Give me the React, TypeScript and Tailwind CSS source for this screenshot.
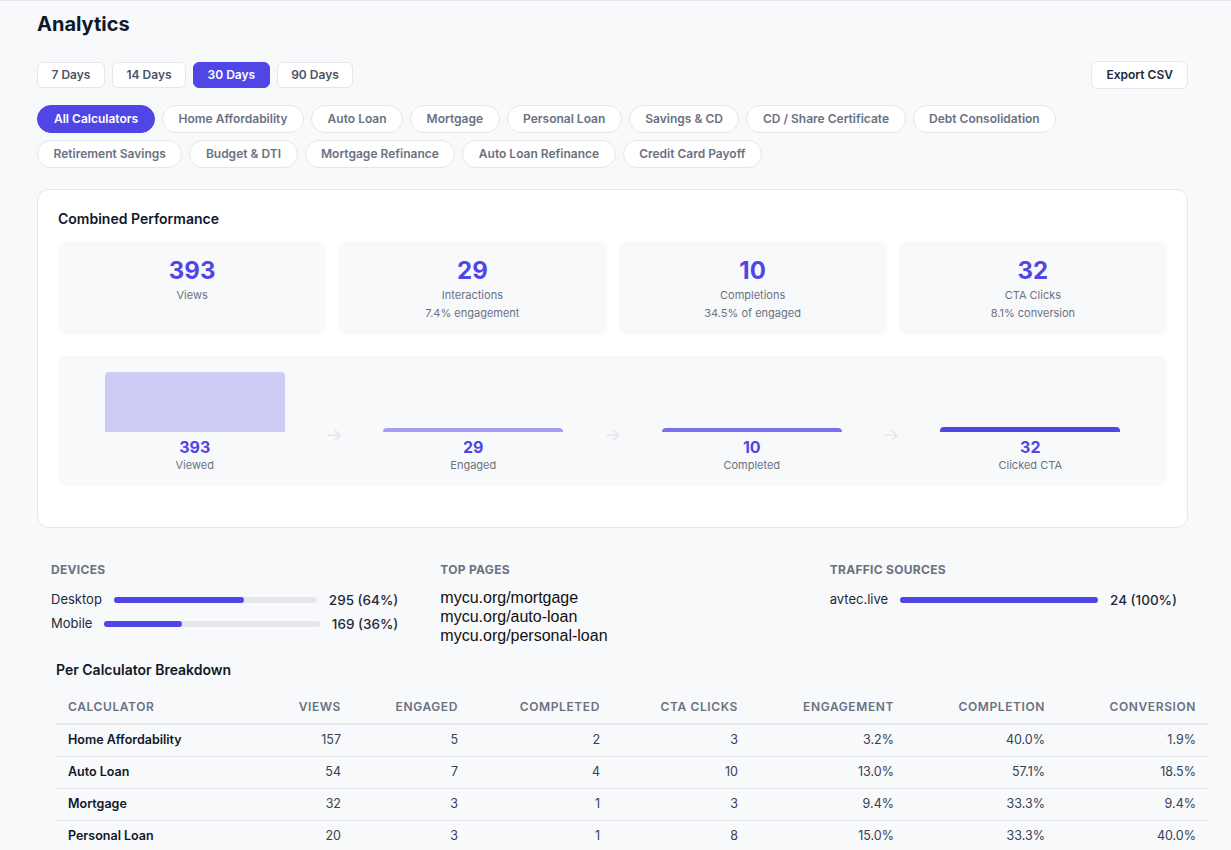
import React from "react";

const ranges = ["7 Days", "14 Days", "30 Days", "90 Days"];
const calcs = [
  "All Calculators",
  "Home Affordability",
  "Auto Loan",
  "Mortgage",
  "Personal Loan",
  "Savings & CD",
  "CD / Share Certificate",
  "Debt Consolidation",
  "Retirement Savings",
  "Budget & DTI",
  "Mortgage Refinance",
  "Auto Loan Refinance",
  "Credit Card Payoff",
];

const stats = [
  { value: 393, label: "Views", sub: "" },
  { value: 29, label: "Interactions", sub: "7.4% engagement" },
  { value: 10, label: "Completions", sub: "34.5% of engaged" },
  { value: 32, label: "CTA Clicks", sub: "8.1% conversion" },
];

const funnel = [
  { value: 393, label: "Viewed", color: "bg-[#4f46e5]/25" },
  { value: 29, label: "Engaged", color: "bg-[#4f46e5]/50" },
  { value: 10, label: "Completed", color: "bg-[#4f46e5]/75" },
  { value: 32, label: "Clicked CTA", color: "bg-[#4f46e5]" },
];

const rows = [
  ["Home Affordability", "157", "5", "2", "3", "3.2%", "40.0%", "1.9%"],
  ["Auto Loan", "54", "7", "4", "10", "13.0%", "57.1%", "18.5%"],
  ["Mortgage", "32", "3", "1", "3", "9.4%", "33.3%", "9.4%"],
  ["Personal Loan", "20", "3", "1", "8", "15.0%", "33.3%", "40.0%"],
];

const heads = ["Calculator", "Views", "Engaged", "Completed", "CTA Clicks", "Engagement", "Completion", "Conversion"];
const widths = ["w-[200px]", "w-[97px]", "w-[117px]", "w-[142px]", "w-[138px]", "w-[156px]", "w-[151px]", "w-[151px]"];

function Bar({ label, value, pct }: { label: string; value: string; pct: number }) {
  return (
    <div className="flex h-6 items-center gap-3 text-[13px] text-gray-800">
      <span>{label}</span>
      <div className="h-[6px] flex-1 rounded-full bg-gray-200">
        <div className="h-full rounded-full bg-[#4f46e5]" style={{ width: `${pct}%` }} />
      </div>
      <span className="text-[13.5px] font-medium">{value}</span>
    </div>
  );
}

export default function App() {
  const max = 393;
  return (
    <div className="min-h-screen border-t border-gray-200 bg-[#f8f9fb] pt-[9px] pr-[43px] pl-[37px] text-gray-900 [font-family:Inter,'Noto_Sans',sans-serif]">
      <h1 className="text-[20px] leading-7 font-bold text-gray-900">Analytics</h1>

      <div className="mt-[23px] flex items-center justify-between">
        <div className="flex gap-[7px]">
          {ranges.map((r) => (
            <button
              key={r}
              className={
                r === "30 Days"
                  ? "h-[26px] rounded-md border border-[#4f46e5] bg-[#4f46e5] px-[13.5px] text-[12px] font-semibold text-white"
                  : "h-[26px] rounded-md border border-gray-200 bg-white px-[13.5px] text-[12px] font-semibold text-gray-600"
              }
            >
              {r}
            </button>
          ))}
        </div>
        <button className="h-[28px] rounded-md border border-gray-200 bg-white px-[14px] text-[12px] font-semibold text-gray-800">
          Export CSV
        </button>
      </div>

      <div className="mt-4 flex flex-wrap gap-[7px]">
        {calcs.map((c) => (
          <button
            key={c}
            className={
              c === "All Calculators"
                ? "h-[28px] rounded-full border border-[#4f46e5] bg-[#4f46e5] px-4 text-[12px] font-semibold text-white"
                : "h-[28px] rounded-full border border-gray-200 bg-white px-[15.5px] text-[12px] font-semibold text-gray-500"
            }
          >
            {c}
          </button>
        ))}
      </div>

      <div className="mt-[21px] rounded-xl border border-gray-200 bg-white px-5 pt-[19px] pb-[41px]">
        <h2 className="text-[14px] leading-5 font-semibold text-gray-900">Combined Performance</h2>
        <div className="mt-3 grid grid-cols-4 gap-3">
          {stats.map((s) => (
            <div key={s.label} className="flex h-[94px] flex-col items-center rounded-lg bg-[#f8f9fb] pt-4">
              <div className="text-[24px] leading-7 font-bold text-[#4f46e5]">{s.value}</div>
              <div className="mt-[2px] text-[11px] leading-4 text-gray-500">{s.label}</div>
              {s.sub && <div className="mt-[2px] text-[11px] leading-4 text-gray-500">{s.sub}</div>}
            </div>
          ))}
        </div>

        <div className="mt-[21px] flex items-start rounded-lg bg-[#f8f9fb] px-6 pt-4 pb-[13px]">
          {funnel.map((f, i) => (
            <React.Fragment key={f.label}>
              {i > 0 && (
                <div className="flex h-[60px] w-[53px] shrink-0 items-end justify-center text-[18px] leading-none text-gray-200">
                  <span className="translate-y-[12px]">→</span>
                </div>
              )}
              <div className="flex flex-1 flex-col items-center">
                <div className="flex h-[60px] w-[80%] items-end">
                  <div
                    className={`w-full rounded-t ${f.color}`}
                    style={{ height: `${Math.max(4, (f.value / max) * 60)}px` }}
                  />
                </div>
                <div className="mt-[5px] text-[16px] leading-5 font-bold text-[#4f46e5]">{f.value}</div>
                <div className="text-[11px] leading-4 text-gray-500">{f.label}</div>
              </div>
            </React.Fragment>
          ))}
        </div>
      </div>

      <div className="mt-[34px] grid grid-cols-3 gap-[42px] pr-[11px] pl-[14px]">
        <div>
          <div className="text-[12px] leading-4 font-bold tracking-wide text-gray-500 uppercase">Devices</div>
          <div className="mt-[10px] flex flex-col">
            <Bar label="Desktop" value="295 (64%)" pct={64} />
            <Bar label="Mobile" value="169 (36%)" pct={36} />
          </div>
        </div>
        <div>
          <div className="text-[12px] leading-4 font-bold tracking-wide text-gray-500 uppercase">Top Pages</div>
          <div className="mt-[10px] text-[16px] leading-[19px] text-[#111] [font-family:'Liberation_Sans',Arial,sans-serif]">
            <div>mycu.org/mortgage</div>
            <div>mycu.org/auto-loan</div>
            <div>mycu.org/personal-loan</div>
          </div>
        </div>
        <div>
          <div className="text-[12px] leading-4 font-bold tracking-wide text-gray-500 uppercase">Traffic Sources</div>
          <div className="mt-[10px]">
            <Bar label="avtec.live" value="24 (100%)" pct={100} />
          </div>
        </div>
      </div>

      <div className="mt-[15px] ml-[19px] w-[1152px]">
        <h2 className="text-[14px] leading-5 font-semibold text-gray-900">Per Calculator Breakdown</h2>
        <table className="mt-[11px] w-full table-fixed border-collapse">
          <thead>
            <tr className="border-b-2 border-gray-200">
              {heads.map((h, i) => (
                <th
                  key={h}
                  className={`${widths[i]} h-[33px] px-3 text-[12px] font-semibold tracking-wider text-gray-500 uppercase ${
                    i === 0 ? "text-left" : "text-right"
                  }`}
                >
                  {h}
                </th>
              ))}
            </tr>
          </thead>
          <tbody>
            {rows.map((r) => (
              <tr key={r[0]} className="border-b border-gray-200">
                {r.map((c, i) => (
                  <td
                    key={i}
                    className={
                      i === 0
                        ? "h-[32px] px-3 text-left text-[12.5px] font-semibold text-gray-900"
                        : "h-[32px] px-3 text-right text-[12.5px] text-gray-700"
                    }
                  >
                    {c}
                  </td>
                ))}
              </tr>
            ))}
          </tbody>
        </table>
      </div>
    </div>
  );
}
